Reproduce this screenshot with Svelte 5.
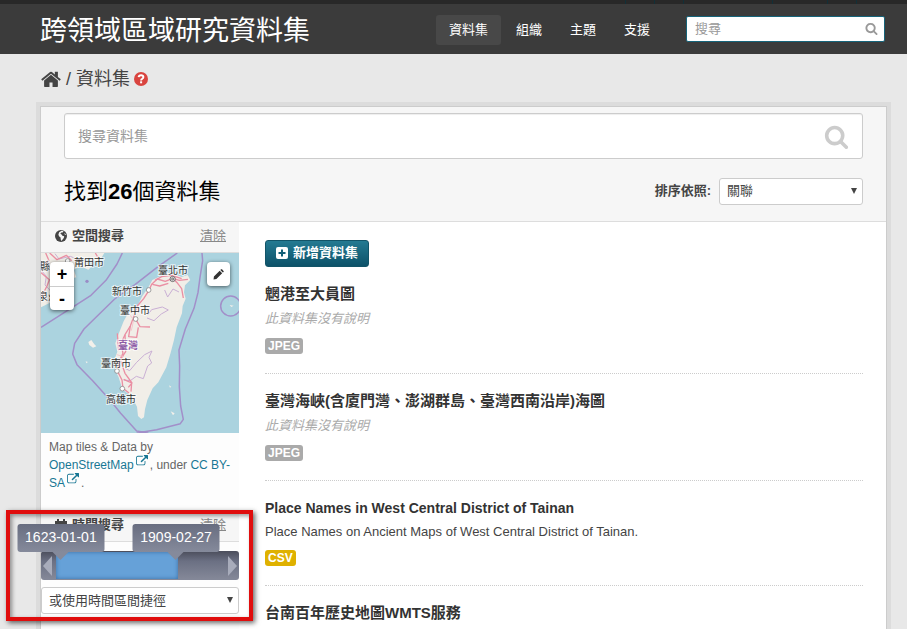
<script>
  const navItems = ['資料集', '組織', '主題', '支援'];
  const datasets = [
    { lang: 'zh', title: '魍港至大員圖', notes: '', format: 'JPEG' },
    { lang: 'zh', title: '臺灣海峽(含廈門灣、澎湖群島、臺灣西南沿岸)海圖', notes: '', format: 'JPEG' },
    {
      lang: 'en',
      title: 'Place Names in West Central District of Tainan',
      notes: 'Place Names on Ancient Maps of West Central District of Tainan.',
      format: 'CSV'
    },
    { lang: 'zh', title: '台南百年歷史地圖WMTS服務', notes: null, format: null }
  ];
  const cities = [
    { name: '莆田市', x: 33, y: 13 },
    { name: '晉江縣', x: -21, y: 17 },
    { name: '泉州市', x: -3, y: 47 },
    { name: '臺北市', x: 117, y: 21 },
    { name: '新竹市', x: 71, y: 42 },
    { name: '臺中市', x: 79, y: 61 },
    { name: '臺南市', x: 60, y: 114 },
    { name: '高雄市', x: 65, y: 150 }
  ];
  const towns = [[341, 210], [302, 297], [246, 453], [262, 506], [98, 123]];

  let from = $state(4);
  let to = $state(71);
</script>

{#snippet searchIcon()}
  <svg viewBox="0 0 1792 1792" aria-hidden="true"><path d="M1216 832q0-185-131.5-316.5t-316.5-131.5-316.5 131.5-131.5 316.5 131.5 316.5 316.5 131.5 316.5-131.5 131.5-316.5zm512 832q0 52-38 90t-90 38q-54 0-90-38l-343-342q-179 124-399 124-143 0-273.5-55.5t-225-150-150-225-55.5-273.5 55.5-273.5 150-225 225-150 273.5-55.5 273.5 55.5 225 150 150 225 55.5 273.5q0 220-124 399l343 343q37 37 37 90z" /></svg>
{/snippet}

{#snippet externalIcon()}
  <svg class="external" viewBox="0 0 1792 1792" aria-hidden="true"><path d="M1408 928v320q0 119-84.5 203.5t-203.5 84.5h-832q-119 0-203.5-84.5t-84.5-203.5v-832q0-119 84.5-203.5t203.5-84.5h704q14 0 23 9t9 23v64q0 14-9 23t-23 9h-704q-66 0-113 47t-47 113v832q0 66 47 113t113 47h832q66 0 113-47t47-113v-320q0-14 9-23t23-9h64q14 0 23 9t9 23zm384-864v512q0 26-19 45t-45 19-45-19l-176-176-652 652q-10 10-23 10t-23-10l-114-114q-10-10-10-23t10-23l652-652-176-176q-19-19-19-45t19-45 45-19h512q26 0 45 19t19 45z" /></svg>
{/snippet}

<div class="page">
  <div class="account"><i></i><i></i><i></i><i></i><i></i><i></i></div>
  <header class="masthead">
    <a class="brand" href="#home">跨領域區域研究資料集</a>
    <nav>
      {#each navItems as item, i}
        <a href="#nav" class:active={i === 0}>{item}</a>
      {/each}
    </nav>
    <form class="site-search">
      <input type="text" placeholder="搜尋" aria-label="搜尋" />
      <button type="button" aria-label="搜尋">{@render searchIcon()}</button>
    </form>
  </header>

  <div class="breadcrumb">
    <a href="#home" aria-label="首頁">
      <svg class="home" viewBox="64 200 1664 1336" aria-hidden="true"><path d="M1472 992v480q0 26-19 45t-45 19h-384v-384h-256v384h-384q-26 0-45-19t-19-45v-480q0-1 .5-3t.5-3l575-474 575 474q1 2 1 6zm223-69l-62 74q-8 9-21 11h-3q-13 0-21-7l-692-577-692 577q-12 8-24 7-13-2-21-11l-62-74q-8-10-7-23.5t11-21.5l719-599q32-26 76-26t76 26l244 204v-195q0-14 9-23t23-9h192q14 0 23 9t9 23v408l219 182q10 8 11 21.5t-7 23.5z" /></svg>
    </a>
    <span>/</span>
    <a href="#datasets">資料集</a>
    <a class="help" href="#help" aria-label="說明">
      <svg viewBox="0 0 14 14" aria-hidden="true"><circle cx="7" cy="7" r="7" fill="#d9443f" /><path d="M4.600 5.200Q4.900 3.200 7.100 3.200T9.400 5.100Q9.400 6.100 8.200 6.800Q7.100 7.400 7.100 8.400" fill="none" stroke="#fff" stroke-width="1.900" /><rect x="6.100" y="9.300" width="2" height="2" fill="#fff" /></svg>
    </a>
  </div>

  <div class="wrapper">
    <section class="search-head">
      <form class="main-search">
        <input type="text" placeholder="搜尋資料集" aria-label="搜尋資料集" />
        <button type="button" aria-label="搜尋資料集">{@render searchIcon()}</button>
      </form>
      <div class="result-row">
        <h1>找到<b>26</b>個資料集</h1>
        <label for="order">排序依照:</label>
        <div class="select order">
          <select id="order"><option>關聯</option></select>
          <svg viewBox="0 0 8 8" aria-hidden="true"><path d="M1 1H7L4 7Z" /></svg>
        </div>
      </div>
    </section>

    <div class="columns">
      <aside>
        <h2>
          <svg viewBox="0 0 12 12" aria-hidden="true"><circle cx="6" cy="6" r="6" fill="#444" /><path d="M6.500 .8 8.600 1.300 7.600 2.400 6.300 2.500 5.300 3.700 6.600 4.500 7.400 5.700 9.200 6.200 8.800 8 7 10.200 6.300 11 5.700 9.300 5.600 7.500 4 6.200 3.400 4.600 4.200 2.200ZM9.800 3 11 4.900 10.300 5.100 9.400 4.100Z" fill="#f6f6f6" /></svg>
          空間搜尋 <a href="#clear-map">清除</a>
        </h2>
        <div class="map">
          <svg viewBox="0 0 198 180" preserveAspectRatio="xMidYMid slice" role="img" aria-label="臺灣">
            <rect width="198" height="180" fill="#abd3df" />
            <g transform="scale(.3333) translate(-18 -99)" fill="none" stroke-linejoin="round">
              <path d="M18 99H208L196 119 173 124 163 112 148 117 160 135 171 139 160 149 136 139 116 149 124 172 103 177 116 197 90 212 60 225 45 248 18 262Z" fill="#f1eee8" />
              <path d="M389 163 410 157 425 165 440 171 458 165 466 180 450 196 447 217 452 236 443 258 441 280 425 322 417 360 407 398 394 442 370 487 353 505 337 540 330 568 327 592 319 597 309 588 306 560 292 535 277 519 262 507 251 472 240 450 238 420 247 395 241 370 252 339 266 304 280 278 309 256 322 228 339 204 352 180 371 171Z" fill="#f1eee8" />
              <path d="M160 366 169 360 178 373 184 379 174 383 163 375ZM152 424 159 426 154 430ZM407 574 419 580 414 586ZM402 496 409 500 405 503ZM584 255 596 257 589 261Z" fill="#f3f0ea" />
              <g stroke="#a28fc9" stroke-width="4.500">
                <path d="M18 322 84 280 168 226 213 181 246 132 262 99" />
                <path d="M427 99 370 139 300 194 239 237 147 327 119 370 113 402 126 434 173 482 225 540 257 580 305 633 340 639M305 639 365 629 436 611 445 598 437 558 433 500 434 438 432 390 451 327 477 265 489 218 495 173 503 122 501 99" />
                <circle cx="587" cy="258" r="30" />
              </g>
              <g stroke="#c9afd4" stroke-width="3">
                <path d="M338 285 350 269 382 261 400 270 379 282 357 302 336 294M266 480 286 482 304 469 325 476 338 438 350 429 342 412 351 393 329 404 305 427 284 452 270 445M389 210 398 231 414 207 432 216" />
                <path d="M18 150 34 169 30 195 50 216M60 101 72 117 106 109 136 122" />
              </g>
              <g stroke="#ea8fa3" stroke-width="4">
                <path d="M459 178 433 181 413 175 391 184 367 177 350 193 342 211 326 236 307 258 296 291 286 318 270 344 258 370 264 400 250 429 248 455 261 480 264 505 282 519" />
                <path d="M415 177 428 190 440 206 445 234M352 193 374 198 400 190M360 181 380 170 410 166 440 176M300 294 315 320 345 321M286 318 281 350 305 352 310 322M247 340 251 392M270 344 272 395 256 419 270 460 291 489 280 502M266 478 290 489 288 515" />
                <path d="M18 158 43 179 36 198 18 232M44 99 66 119 94 106 110 122M181 99 190 114M32 99 42 122 18 137" />
              </g>
              <g stroke="#f4c7cc" stroke-width="3"><path d="M280 278 296 300 289 332M239 430 261 438M245 404 267 410" /></g>
              <circle cx="156" cy="184" r="5" fill="#9a8cc6" />
              {#each towns as [x, y]}
                <circle cx={x} cy={y} r="7" fill="#fff" stroke="#777" stroke-width="2" />
              {/each}
              <circle cx="413" cy="177" r="8" fill="#ddd" stroke="#444" stroke-width="2" />
              <circle cx="413" cy="177" r="3" stroke="#444" stroke-width="2" />
            </g>
            {#each cities as c}
              <text x={c.x} y={c.y}>{c.name}</text>
            {/each}
            <text class="region" x="77" y="96">臺灣</text>
          </svg>
          <div class="zoom">
            <button type="button" aria-label="放大">+</button>
            <button type="button" aria-label="縮小">-</button>
          </div>
          <button type="button" class="draw" aria-label="繪製範圍">
            <svg viewBox="0 0 12 12" aria-hidden="true"><path d="M1 8.200 7.300 1.900 10 4.600 3.700 10.900 .6 11.400ZM8 1.200 8.800.4Q9.300 0 9.800.4L11.500 2.100Q12 2.700 11.500 3.200L10.700 3.900Z" fill="#333" /></svg>
          </button>
        </div>
        <p class="attribution">
          Map tiles &amp; Data by <a href="#osm">OpenStreetMap{@render externalIcon()}</a>, under <a href="#license">CC BY-SA{@render externalIcon()}</a>.
        </p>

        <div class="time-block">
          <h2>
            <svg viewBox="0 0 12 12" aria-hidden="true"><path d="M0 2H2V0H4V2H8V0H10V2H12V12H0ZM1 5V7H3V5ZM4 5V7H6V5ZM7 5V7H9V5ZM10 5V7H11V5ZM1 8V11H3V8ZM4 8V11H6V8ZM7 8V11H9V8Z" fill="#444" fill-rule="evenodd" /></svg>
            時間搜尋 <a href="#clear-time">清除</a>
          </h2>
          <div class="slider">
            <button type="button" class="prev" aria-label="往前"></button>
            <div class="track">
              <div class="range" style="left: {from - 3}%; width: {to - from + 4}%"></div>
              <input type="range" aria-label="起始日期" bind:value={from} />
              <input type="range" aria-label="結束日期" bind:value={to} />
              <output class="tip" style="left: {from}%">1623-01-01</output>
              <output class="tip" style="left: {to}%">1909-02-27</output>
            </div>
            <button type="button" class="next" aria-label="往後"></button>
          </div>
          <div class="select">
            <select aria-label="時間區間捷徑"><option>或使用時間區間捷徑</option></select>
            <svg viewBox="0 0 8 8" aria-hidden="true"><path d="M1 1H7L4 7Z" /></svg>
          </div>
          <div class="highlight"></div>
        </div>
      </aside>

      <main>
        <button type="button" class="add">
          <svg viewBox="0 0 12 12" aria-hidden="true"><rect width="12" height="12" rx="2" fill="#fff" /><path d="M6 2.500V9.500M2.500 6H9.500" stroke="#136078" stroke-width="2" /></svg>
          新增資料集
        </button>
        <ul>
          {#each datasets as d}
            <li>
              <h3 class={d.lang}><a href="#dataset">{d.title}</a></h3>
              {#if d.notes}
                <p>{d.notes}</p>
              {:else if d.notes === ''}
                <p class="empty">此資料集沒有說明</p>
              {/if}
              {#if d.format}
                <a href="#format" class="format" class:csv={d.format === 'CSV'}>{d.format}</a>
              {/if}
            </li>
          {/each}
        </ul>
      </main>
    </div>
  </div>
</div>

<style>
  :global(body) { margin: 0; }
  * { box-sizing: border-box; }
  .page {
    min-height: 100vh;
    display: flex;
    flex-direction: column;
    overflow: hidden;
    background: #e8e8e8;
    color: #444;
    font: 13px/20px "Liberation Sans", "Noto Sans CJK TC", sans-serif;
  }
  a { color: inherit; text-decoration: none; }
  h1, h2, h3, p, ul { margin: 0; padding: 0; }
  input, button, select { font: inherit; color: inherit; margin: 0; }
  button { border: 0; padding: 0; background: none; cursor: pointer; }
  svg { display: block; }

  .account {
    height: 4px;
    display: flex;
    justify-content: flex-end;
    gap: 28px;
    padding-right: 50px;
    background: #282828;
  }
  .account i { width: 1px; background: #123038; }
  .account i:nth-child(3) { margin-right: 60px; }
  .account i:nth-child(4) { margin-right: 26px; }
  .masthead {
    height: 50px;
    display: flex;
    align-items: center;
    padding: 0 22px 0 40px;
    background: #3b3b3b;
    color: #fff;
  }
  .brand { padding-top: 3px; font-size: 27px; line-height: 40px; }
  nav { display: flex; gap: 2px; margin: 2px 23px 0 auto; }
  nav a { padding: 5px 13px; border-radius: 3px; }
  nav a.active { background: #484848; }
  .site-search { position: relative; width: 199px; }
  .site-search input {
    display: block;
    width: 100%;
    height: 26px;
    padding: 0 32px 2px 8px;
    border: 1px solid #16647a;
    border-radius: 2px;
    background: #fff;
  }
  input::placeholder { color: #999; opacity: 1; }
  .site-search button { position: absolute; right: 7px; top: 6px; color: #999; }
  .site-search svg { width: 13px; height: 13px; fill: currentColor; }

  .breadcrumb {
    display: flex;
    align-items: center;
    gap: 5px;
    height: 52px;
    padding: 0 21px 2px 41px;
    font-size: 18px;
  }
  .home { width: 20px; height: 16px; fill: #444; }
  .help { margin-left: -1px; }
  .help svg { width: 14px; height: 14px; }

  .wrapper {
    flex: 1;
    display: flex;
    flex-direction: column;
    margin: 0 20px 0 40px;
    border: 1px solid #ccc;
    border-bottom: 0;
    background: #fff;
    box-shadow: 0 0 0 4px rgba(0, 0, 0, .05);
  }
  .search-head { padding: 6px 23px 16px; background: #f6f6f6; border-bottom: 1px solid #ddd; }
  .main-search { position: relative; }
  .main-search input {
    display: block;
    width: 100%;
    height: 46px;
    padding: 0 50px 0 13px;
    border: 1px solid #ccc;
    border-radius: 3px;
    background: #fff;
    box-shadow: inset 0 1px 1px rgba(0, 0, 0, .07);
    font-size: 14px;
  }
  .main-search button { position: absolute; right: 14px; top: 11px; color: #ccc; }
  .main-search svg { width: 25px; height: 25px; fill: currentColor; }
  .result-row { display: flex; align-items: center; margin-top: 18px; }
  h1 { flex: 1; padding-top: 1px; font-size: 22px; line-height: 27px; font-weight: 400; color: #000; }
  label { margin-right: 8px; font-weight: 700; }
  .select { position: relative; }
  .select select {
    display: block;
    appearance: none;
    width: 100%;
    height: 27px;
    padding: 0 20px 0 7px;
    border: 1px solid #ccc;
    border-radius: 3px;
    background: #fff;
    line-height: 20px;
  }
  .select svg { position: absolute; right: 5px; top: 9px; width: 8px; height: 8px; fill: #444; pointer-events: none; }
  .order { width: 144px; }

  .columns { flex: 1; display: flex; }
  aside { width: 198px; background: #fdfdfd; }
  h2 {
    display: flex;
    align-items: center;
    height: 31px;
    padding: 0 13px 2px 14px;
    background: #f6f6f6;
    border-bottom: 1px solid #ddd;
    font-size: 13px;
    line-height: 20px;
  }
  h2 svg { width: 12px; height: 12px; margin-right: 5px; }
  h2 a { margin-left: auto; color: #888; font-weight: 400; text-decoration: underline; }
  .map { position: relative; height: 180px; background: #abd3df; overflow: hidden; }
  .map > svg { width: 100%; height: 100%; }
  .map text { font-size: 10px; fill: #333; stroke: #fff; stroke-width: 2px; stroke-opacity: .7; paint-order: stroke; }
  .map text.region { fill: #8d5ca6; font-weight: 700; }
  .zoom { position: absolute; left: 9px; top: 9px; width: 24px; border-radius: 4px; background: #fff; box-shadow: 0 1px 4px rgba(0, 0, 0, .6); }
  .zoom button { display: block; width: 24px; height: 24px; font-size: 18px; line-height: 24px; font-weight: 700; color: #000; }
  .zoom button + button { border-top: 1px solid #ccc; line-height: 20px; }
  .draw {
    position: absolute;
    right: 9px;
    top: 9px;
    width: 23px;
    height: 24px;
    display: grid;
    place-items: center;
    border-radius: 4px;
    background: #fff;
    box-shadow: 0 1px 4px rgba(0, 0, 0, .6);
  }
  .draw svg { width: 11px; height: 11px; }
  .attribution { padding: 5px 8px 19px; font-size: 12px; line-height: 18px; color: #666; }
  .attribution a { color: #187794; }
  .external { display: inline-block; width: 12px; height: 12px; margin: -4px 2px 0; vertical-align: 2px; fill: currentColor; }

  .time-block { position: relative; display: flow-root; }
  .slider { display: flex; height: 29px; margin: 9px 0 7px; border-radius: 3px; background: linear-gradient(#4b4d5b, #6b7083 35%, #858999); }
  .slider button { width: 13px; display: grid; place-items: center; }
  .slider button::before { content: ""; border: 9px solid transparent; }
  .slider .prev::before { border-right-color: #a8acbb; border-left-width: 0; }
  .slider .next::before { border-left-color: #a8acbb; border-right-width: 0; }
  .slider button::before { border-top-width: 10px; border-bottom-width: 10px; }
  .track { position: relative; flex: 1; }
  .range { position: absolute; top: 1px; bottom: 1px; background: #66a1d8; box-shadow: inset 0 0 4px #3a6fa5; }
  .track input { position: absolute; inset: 0; width: 100%; height: 100%; opacity: 0; }
  .tip {
    position: absolute;
    bottom: 28px;
    width: 87px;
    height: 28px;
    transform: translateX(-50%);
    border-radius: 3px;
    background: linear-gradient(#686d80, #858a9b);
    color: #fff;
    font-size: 14px;
    line-height: 26px;
    text-align: center;
  }
  .tip::after { content: ""; position: absolute; left: 35px; top: 28px; border: 8px solid transparent; border-top-color: #858a9b; border-bottom: 0; }
  .highlight {
    position: absolute;
    inset: -1px -14px -7px -35px;
    border: 4px solid #e00d0d;
    box-shadow: 2px 2px 5px rgba(0, 0, 0, .6), inset 2px 2px 4px rgba(0, 0, 0, .4);
    pointer-events: none;
  }

  main { flex: 1; min-width: 0; padding: 18px 23px 0 26px; }
  .add {
    display: flex;
    align-items: center;
    gap: 5px;
    height: 27px;
    padding: 0 10px 1px;
    border: 1px solid #125468;
    border-radius: 3px;
    background: linear-gradient(#247a92, #0d5269);
    color: #fff;
    font-weight: 700;
  }
  .add svg { width: 12px; height: 12px; }
  ul { list-style: none; }
  li { padding: 18px 0 19px; border-bottom: 1px dotted #ccc; }
  li:last-child { padding-bottom: 0; border: 0; }
  h3 { font-size: 14px; line-height: 18px; color: #333; }
  h3.zh { font-size: 15px; }
  li p { margin-top: 5px; line-height: 20px; }
  li p.empty { line-height: 22px; font-style: italic; color: #aaa; }
  .format {
    display: table;
    margin-top: 8px;
    padding: 0 3px;
    border-radius: 3px;
    background: #aaa;
    color: #fff;
    font-size: 12px;
    line-height: 16px;
    font-weight: 700;
  }
  .format.csv { background: #dfb100; }
</style>
